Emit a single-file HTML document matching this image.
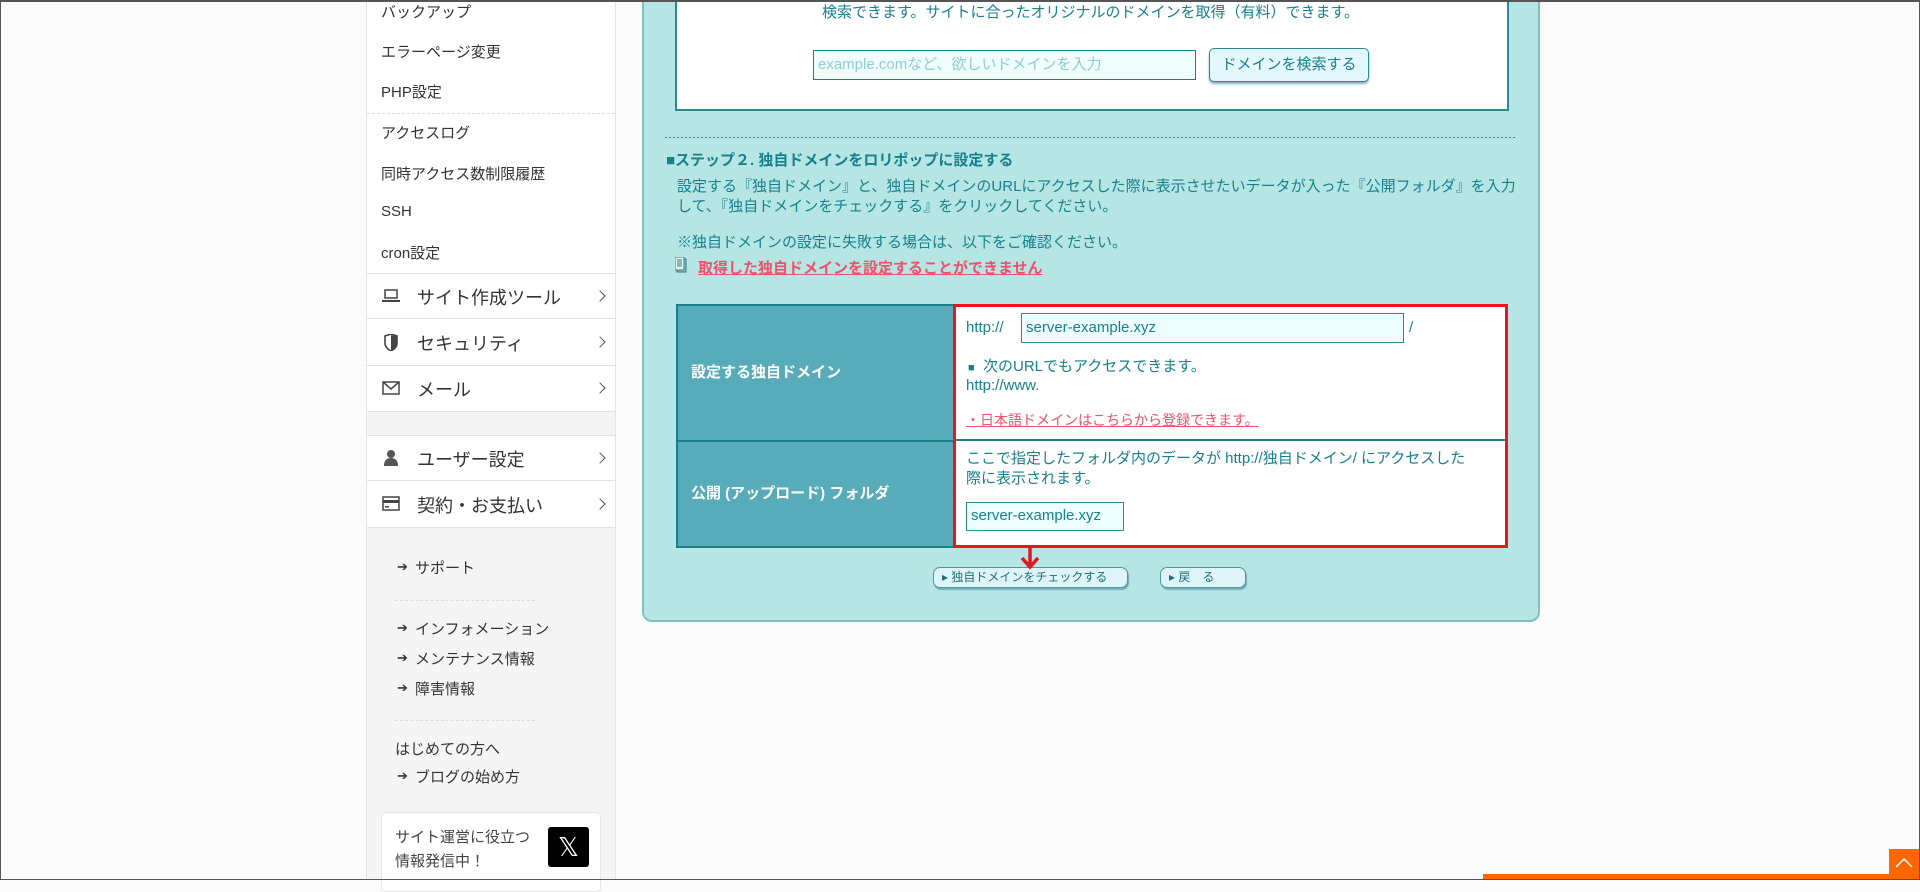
<!DOCTYPE html>
<html><head><meta charset="utf-8">
<style>
*{margin:0;padding:0;box-sizing:border-box}
body{width:1920px;height:880px;position:relative;overflow:hidden;background:#fbfbfb;font-family:"Liberation Sans","Noto Sans CJK JP",sans-serif;color:#333}
.a{position:absolute;white-space:nowrap}
#frame{position:absolute;left:0;top:0;width:1920px;height:880px;border:1px solid #555;border-top:2px solid #555;z-index:50;pointer-events:none}
#side{position:absolute;left:366px;top:0;width:250px;height:880px;background:#f5f5f5;border-left:1px solid #e4e4e4;border-right:1px solid #e4e4e4}
.wh{position:absolute;left:0;width:248px;background:#fff}
.sm{font-size:15px;color:#333;left:14px}
.lg{font-size:18px;color:#333;left:50px}
.hr{position:absolute;left:0;width:248px;height:1px;background:#e2e2e2}
.chev{position:absolute;left:229px;width:8px;height:8px;border-right:1.5px solid #555;border-top:1.5px solid #555;transform:rotate(45deg)}
.sub{font-size:15px;color:#333;left:48px}
.arr{position:absolute;left:30px;font-size:13px;color:#333}
.dash{position:absolute;left:28px;width:140px;border-top:1px dashed #ddd}
#panel{position:absolute;left:642px;top:-10px;width:898px;height:632px;background:#b6e6e3;border:2px solid #7cc3c0;border-top:none;border-radius:0 0 10px 10px}
.t{color:#17808f;font-size:15px}
.lk{color:#f0506a;text-decoration:underline;font-weight:bold;font-size:15px}
</style></head><body>
<div id="side">
  <div class="wh" style="top:0;height:528px"></div>
  <div class="a sm" style="top:1px">バックアップ</div>
  <div class="a sm" style="top:41px">エラーページ変更</div>
  <div class="a sm" style="top:81px">PHP設定</div>
  <div style="position:absolute;left:0;top:113px;width:248px;border-top:1px dashed #ddd"></div>
  <div class="a sm" style="top:122px">アクセスログ</div>
  <div class="a sm" style="top:163px">同時アクセス数制限履歴</div>
  <div class="a sm" style="top:203px">SSH</div>
  <div class="a sm" style="top:242px">cron設定</div>
  <div class="hr" style="top:273px"></div>
  <svg class="a" style="left:15px;top:289px" width="18" height="14"><rect x="3" y="1" width="12" height="8" fill="none" stroke="#444" stroke-width="1.5"/><rect x="0" y="11" width="18" height="2" fill="#444"/></svg>
  <div class="a lg" style="top:284px">サイト作成ツール</div><div class="chev" style="top:292px"></div>
  <div class="hr" style="top:318px"></div>
  <svg class="a" style="left:17px;top:334px" width="14" height="17"><path d="M1 2 L7 0 L13 2 L13 9 Q13 14 7 17 Q1 14 1 9Z" fill="none" stroke="#444" stroke-width="1.6"/><path d="M7 1 L13 2.5 L13 9 Q13 14 7 16.5Z" fill="#444"/></svg>
  <div class="a lg" style="top:330px">セキュリティ</div><div class="chev" style="top:338px"></div>
  <div class="hr" style="top:365px"></div>
  <svg class="a" style="left:15px;top:381px" width="18" height="14"><rect x="1" y="1" width="16" height="12" fill="none" stroke="#444" stroke-width="1.5"/><path d="M1 1 L9 8 L17 1" fill="none" stroke="#444" stroke-width="1.5"/></svg>
  <div class="a lg" style="top:376px">メール</div><div class="chev" style="top:384px"></div>
  <div class="hr" style="top:411px"></div>
  <div style="position:absolute;left:0;top:412px;width:248px;height:23px;background:#f5f5f5"></div>
  <div class="hr" style="top:435px"></div>
  <svg class="a" style="left:17px;top:450px" width="14" height="16"><circle cx="7" cy="4" r="4" fill="#555"/><path d="M0 16 Q0 8 7 8 Q14 8 14 16Z" fill="#555"/></svg>
  <div class="a lg" style="top:446px">ユーザー設定</div><div class="chev" style="top:454px"></div>
  <div class="hr" style="top:480px"></div>
  <svg class="a" style="left:15px;top:496px" width="18" height="15"><rect x="1" y="1" width="16" height="13" fill="none" stroke="#444" stroke-width="1.5"/><rect x="1" y="4" width="16" height="3" fill="#444"/><rect x="3" y="10" width="4" height="1.5" fill="#444"/></svg>
  <div class="a lg" style="top:492px">契約・お支払い</div><div class="chev" style="top:500px"></div>
  <div class="hr" style="top:527px"></div>
  <div class="arr" style="top:559px">➔</div><div class="a sub" style="top:557px">サポート</div>
  <div class="dash" style="top:600px"></div>
  <div class="arr" style="top:620px">➔</div><div class="a sub" style="top:618px">インフォメーション</div>
  <div class="arr" style="top:650px">➔</div><div class="a sub" style="top:648px">メンテナンス情報</div>
  <div class="arr" style="top:680px">➔</div><div class="a sub" style="top:678px">障害情報</div>
  <div class="dash" style="top:720px"></div>
  <div class="a sub" style="top:738px;left:28px">はじめての方へ</div>
  <div class="arr" style="top:768px">➔</div><div class="a sub" style="top:766px">ブログの始め方</div>
  <div style="position:absolute;left:14px;top:812px;width:220px;height:80px;background:#fff;border:1px solid #e6e6e6;border-radius:4px"></div>
  <div class="a" style="left:28px;top:826px;font-size:15px;line-height:24px;color:#444">サイト運営に役立つ<br>情報発信中！</div>
  <div style="position:absolute;left:181px;top:827px;width:41px;height:40px;background:#000;border-radius:3px;color:#fff;font-size:26px;text-align:center;line-height:40px">𝕏</div>
</div>

<div id="panel"></div>
<div class="a" style="left:675px;top:0;width:834px;height:111px;background:#fff;border:2px solid #2a8a96;border-top:none"></div>
<div class="a t" style="left:822px;top:1px">検索できます。サイトに合ったオリジナルのドメインを取得（有料）できます。</div>
<div class="a" style="left:813px;top:50px;width:383px;height:30px;background:#f0fefe;border:1.5px solid #1a7f8c;color:#8fcdd4;font-size:15px;line-height:27px;padding-left:4px">example.comなど、欲しいドメインを入力</div>
<div class="a" style="left:1209px;top:48px;width:160px;height:34px;background:#e3f7fc;border:1.5px solid #2a8a96;border-radius:5px;box-shadow:0 2px 2px #8ab;color:#17808f;font-size:15px;line-height:31px;text-align:center">ドメインを検索する</div>
<div class="a" style="left:665px;top:137px;width:851px;height:1px;background:repeating-linear-gradient(90deg,#2a8a96 0 2px,transparent 2px 4px)"></div>
<div class="a" style="left:666px;top:149px;font-size:15px;font-weight:bold;color:#17808f">■ステップ２. 独自ドメインをロリポップに設定する</div>
<div class="a t" style="left:677px;top:177px;line-height:20px">設定する『独自ドメイン』と、独自ドメインのURLにアクセスした際に表示させたいデータが入った『公開フォルダ』を入力<br>して、『独自ドメインをチェックする』をクリックしてください。</div>
<div class="a t" style="left:677px;top:231px">※独自ドメインの設定に失敗する場合は、以下をご確認ください。</div>
<svg class="a" style="left:675px;top:257px" width="12" height="16"><rect x="2" y="2" width="9" height="13" fill="#9cc" stroke="#377" /><rect x="0" y="0" width="9" height="13" fill="#e8f4f4" stroke="#377"/><path d="M2 3h5M2 5h5M2 7h5M2 9h5" stroke="#377"/></svg>
<div class="a lk" style="left:698px;top:257px">取得した独自ドメインを設定することができません</div>

<div class="a" style="left:676px;top:304px;width:830px;height:244px;background:#58abb8;border:2px solid #1a7f8c"></div>
<div class="a" style="left:676px;top:440px;width:278px;height:1.5px;background:#1a7f8c"></div>
<div class="a" style="left:691px;top:361px;color:#fff;font-weight:bold;font-size:15px">設定する独自ドメイン</div>
<div class="a" style="left:691px;top:482px;color:#fff;font-weight:bold;font-size:15px">公開 (アップロード) フォルダ</div>
<div class="a" style="left:953px;top:304px;width:555px;height:244px;background:#fff;border:3px solid #e8141e"></div>
<div class="a" style="left:955px;top:439px;width:551px;height:1.5px;background:#1a7f8c"></div>
<div class="a t" style="left:966px;top:319px">http://</div>
<div class="a" style="left:1021px;top:313px;width:383px;height:30px;background:#eefefe;border:1.5px solid #2a8a96;color:#17808f;font-size:15px;line-height:27px;padding-left:4px">server-example.xyz</div>
<div class="a t" style="left:1409px;top:319px">/</div>
<div class="a t" style="left:968px;top:355px"><span style="font-size:11px">■</span>&nbsp; 次のURLでもアクセスできます。</div>
<div class="a t" style="left:966px;top:377px">http://www.</div>
<div class="a" style="left:966px;top:410px;color:#f0506a;text-decoration:underline;font-size:14px">・日本語ドメインはこちらから登録できます。</div>
<div class="a t" style="left:966px;top:449px;line-height:20px">ここで指定したフォルダ内のデータが http://独自ドメイン/ にアクセスした<br>際に表示されます。</div>
<div class="a" style="left:966px;top:502px;width:158px;height:29px;background:#eefefe;border:1.5px solid #2a8a96;color:#17808f;font-size:15px;line-height:26px;padding-left:4px">server-example.xyz</div>

<div class="a" style="left:933px;top:567px;width:195px;height:21px;background:#dff4f8;border:1.5px solid #4a9aa5;border-radius:7px;box-shadow:1px 2px 1px #7ab;font-size:12px;color:#1a6f7c;line-height:18px;padding-left:8px">▸ 独自ドメインをチェックする</div>
<div class="a" style="left:1160px;top:567px;width:86px;height:21px;background:#dff4f8;border:1.5px solid #4a9aa5;border-radius:7px;box-shadow:1px 2px 1px #7ab;font-size:12px;color:#1a6f7c;line-height:18px;padding-left:8px">▸ 戻　る</div>
<svg class="a" style="left:1019px;top:546px" width="22" height="24"><path d="M11 0 V20 M3 12 L11 21 L19 12" fill="none" stroke="#e8141e" stroke-width="3.5"/></svg>

<div class="a" style="left:1483px;top:874px;width:437px;height:6px;background:#ff6600"></div>
<div class="a" style="left:1889px;top:849px;width:30px;height:31px;background:#ff6600"></div>
<svg class="a" style="left:1895px;top:858px" width="18" height="10"><path d="M1 9 L9 1 L17 9" fill="none" stroke="#fff" stroke-width="1.5"/></svg>
<div id="frame"></div>
</body></html>
